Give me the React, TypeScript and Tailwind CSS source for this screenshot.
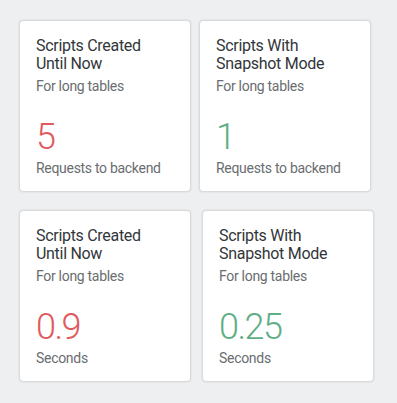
import React from "react";

type CardProps = {
  title: [string, string];
  value: string;
  unit: string;
  tone: "red" | "green";
};

function Card({ title, value, unit, tone }: CardProps) {
  return (
    <div className="w-[172px] h-[172px] shrink-0 bg-white border border-[#d9dadb] rounded-[4px] shadow-[0_0_2px_rgba(0,0,0,0.12)] pl-[16px] pt-[16px] flex flex-col tracking-[-0.3px]">
      <div className="text-[16px] leading-[18px] text-[#32363a]">
        <div>{title[0]}</div>
        <div>{title[1]}</div>
      </div>
      <div className="mt-[3px] text-[14px] leading-[20px] text-[#6a6d70]">For long tables</div>
      <div
        className={
          "mt-[21px] text-[36px] leading-[40px] font-light tracking-[-1.5px] " +
          (tone === "red" ? "text-[#e05a5d]" : "text-[#5fae85]")
        }
      >
        {value}
      </div>
      <div className="mt-[1px] text-[14px] leading-[20px] text-[#6a6d70]">{unit}</div>
    </div>
  );
}

export default function App() {
  return (
    <div
      className="w-[397px] h-[403px] bg-[#edeff0] pl-[19px] pt-[20px] flex flex-col gap-[18px]"
      style={{ fontFamily: "Roboto, 'Liberation Sans', sans-serif" }}
    >
      <div className="flex gap-[8px]">
        <Card title={["Scripts Created", "Until Now"]} value="5" unit="Requests to backend" tone="red" />
        <Card title={["Scripts With", "Snapshot Mode"]} value="1" unit="Requests to backend" tone="green" />
      </div>
      <div className="flex gap-[11px]">
        <Card title={["Scripts Created", "Until Now"]} value="0.9" unit="Seconds" tone="red" />
        <Card title={["Scripts With", "Snapshot Mode"]} value="0.25" unit="Seconds" tone="green" />
      </div>
    </div>
  );
}
